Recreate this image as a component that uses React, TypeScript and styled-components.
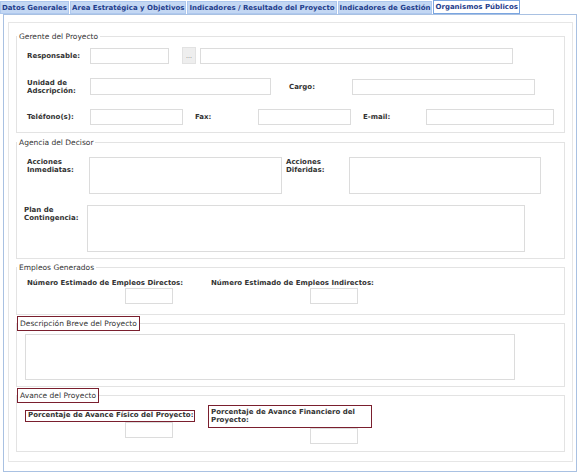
import * as React from 'react'
import styled, { createGlobalStyle } from 'styled-components'

const GlobalStyle = createGlobalStyle`
  html, body {
    margin: 0;
    padding: 0;
    background: #ffffff;
  }
  body {
    font-family: "DejaVu Sans", Verdana, sans-serif;
    font-size: 7px;
    color: #333333;
  }
`

const Page = styled.div`
  width: 581px;
  height: 472px;
  display: flex;
  flex-direction: column;
  box-sizing: border-box;
`

const TabBar = styled.div`
  display: flex;
  align-items: flex-end;
  gap: 1px;
  height: 14px;
`

const Tab = styled.div<{ $active?: boolean }>`
  height: ${p => (p.$active ? '14px' : '13px')};
  box-sizing: border-box;
  padding: 0 1px;
  display: flex;
  align-items: center;
  font-weight: bold;
  font-size: 7px;
  white-space: nowrap;
  color: #1f3d8c;
  background: ${p => (p.$active ? '#ffffff' : '#c3d7f3')};
  border: 1px solid ${p => (p.$active ? '#7aa5e0' : '#aec8ee')};
`

const Panel = styled.div`
  margin: 0 4px 2px 3px;
  flex: 1;
  border: 1px solid #a9c1e2;
  padding: 7px 4px 9px 4px;
  display: flex;
`

const Inner = styled.div`
  flex: 1;
  border: 1px solid #e6e6e6;
  padding: 9px 7px 9px 7px;
  display: flex;
  flex-direction: column;
`

const Section = styled.fieldset<{ $mt?: number; $h: number }>`
  margin: ${p => p.$mt ?? 0}px 0 0 0;
  padding: 0 10px;
  height: ${p => p.$h}px;
  box-sizing: border-box;
  border: 1px solid #e3e3e3;
  display: flex;
  flex-direction: column;
  min-width: 0;
`

const Legend = styled.legend<{ $marked?: boolean }>`
  margin-left: -10px;
  padding: ${p => (p.$marked ? '2px 2px 2px 2px' : '0 2px 0 2px')};
  font-size: 7.5px;
  line-height: 9px;
  color: #333333;
  border: ${p => (p.$marked ? '1px solid #7a1f2e' : 'none')};
`

const Row = styled.div<{ $mt: number; $align?: string }>`
  display: flex;
  align-items: ${p => p.$align ?? 'center'};
  margin-top: ${p => p.$mt}px;
`

const Label = styled.label<{ $w: number; $ml?: number; $marked?: boolean; $nowrap?: boolean }>`
  width: ${p => p.$w}px;
  margin-left: ${p => p.$ml ?? 0}px;
  flex-shrink: 0;
  font-weight: bold;
  font-size: 7px;
  line-height: 8px;
  color: #333333;
  box-sizing: border-box;
  white-space: ${p => (p.$nowrap ? 'nowrap' : 'normal')};
  border: ${p => (p.$marked ? '1px solid #7a1f2e' : 'none')};
  padding: ${p => (p.$marked ? '0 2px' : '0')};
`

const Input = styled.input<{ $w: number; $h?: number; $ml?: number }>`
  width: ${p => p.$w}px;
  height: ${p => p.$h ?? 16}px;
  margin: 0 0 0 ${p => p.$ml ?? 0}px;
  box-sizing: border-box;
  border: 1px solid #dcdcdc;
  background: #ffffff;
  padding: 0;
  flex-shrink: 0;
`

const Area = styled.textarea<{ $w: number; $h: number; $ml?: number }>`
  width: ${p => p.$w}px;
  height: ${p => p.$h}px;
  margin: 0 0 0 ${p => p.$ml ?? 0}px;
  box-sizing: border-box;
  border: 1px solid #dcdcdc;
  background: #ffffff;
  resize: none;
  padding: 0;
  flex-shrink: 0;
`

const DotsButton = styled.button`
  width: 14px;
  height: 17px;
  margin-left: 13px;
  box-sizing: border-box;
  border: 1px solid #e2e2e2;
  background: #eeeeee;
  color: #777777;
  font-size: 7px;
  padding: 0;
  line-height: 10px;
  flex-shrink: 0;
`

const Estimate = styled.div<{ $w: number; $ml?: number }>`
  width: ${p => p.$w}px;
  margin-left: ${p => p.$ml ?? 0}px;
  display: flex;
  flex-direction: column;
  align-items: flex-start;
  flex-shrink: 0;
`

export default function App() {
  return (
    <>
      <GlobalStyle />
      <Page>
        <TabBar>
          <Tab>Datos Generales</Tab>
          <Tab>Area Estratégica y Objetivos</Tab>
          <Tab>Indicadores / Resultado del Proyecto</Tab>
          <Tab>Indicadores de Gestión</Tab>
          <Tab $active>Organismos Públicos</Tab>
        </TabBar>
        <Panel>
          <Inner>
            <Section $h={101}>
              <Legend>Gerente del Proyecto</Legend>
              <Row $mt={6}>
                <Label $w={63}>Responsable:</Label>
                <Input $w={79} />
                <DotsButton>...</DotsButton>
                <Input $w={313} $ml={4} />
              </Row>
              <Row $mt={14}>
                <Label $w={63}>Unidad de Adscripción:</Label>
                <Input $w={181} $h={17} />
                <Label $w={63} $ml={18}>Cargo:</Label>
                <Input $w={183} />
              </Row>
              <Row $mt={14}>
                <Label $w={63}>Teléfono(s):</Label>
                <Input $w={93} />
                <Label $w={63} $ml={12}>Fax:</Label>
                <Input $w={93} />
                <Label $w={63} $ml={12}>E-mail:</Label>
                <Input $w={128} />
              </Row>
            </Section>

            <Section $mt={5} $h={121}>
              <Legend>Agencia del Decisor</Legend>
              <Row $mt={10} $align="flex-start">
                <Label $w={62} style={{ paddingTop: 1 }}>Acciones Inmediatas:</Label>
                <Area $w={193} $h={37} />
                <Label $w={63} $ml={4} style={{ paddingTop: 1 }}>Acciones Diferidas:</Label>
                <Area $w={192} $h={37} />
              </Row>
              <Row $mt={11} $align="flex-start">
                <Label $w={63} style={{ marginLeft: -3, paddingTop: 1 }}>Plan de Contingencia:</Label>
                <Area $w={438} $h={47} />
              </Row>
            </Section>

            <Section $mt={4} $h={52}>
              <Legend>Empleos Generados</Legend>
              <Row $mt={7} $align="flex-start">
                <Estimate $w={160}>
                  <Label $w={160} $nowrap>Número Estimado de Empleos Directos:</Label>
                  <Input $w={48} $h={16} $ml={98} style={{ marginTop: 1 }} />
                </Estimate>
                <Estimate $w={168} $ml={24}>
                  <Label $w={168} $nowrap>Número Estimado de Empleos Indirectos:</Label>
                  <Input $w={48} $h={16} $ml={99} style={{ marginTop: 1 }} />
                </Estimate>
              </Row>
            </Section>

            <Section $mt={1} $h={71}>
              <Legend $marked>Descripción Breve del Proyecto</Legend>
              <Row $mt={3}>
                <Area $w={490} $h={46} $ml={-2} />
              </Row>
            </Section>

            <Section $mt={1} $h={64}>
              <Legend $marked>Avance del Proyecto</Legend>
              <Row $mt={2} $align="flex-start">
                <Estimate $w={170} $ml={-2}>
                  <Label $w={170} $marked $nowrap style={{ marginTop: 5, height: 12 }}>
                    Porcentaje de Avance Físico del Proyecto:
                  </Label>
                  <Input $w={48} $h={16} $ml={100} />
                </Estimate>
                <Estimate $w={164} $ml={13}>
                  <Label $w={164} $marked style={{ padding: '2px 2px 3px', lineHeight: '8px' }}>
                    Porcentaje de Avance Financiero del Proyecto:
                  </Label>
                  <Input $w={48} $h={16} $ml={102} />
                </Estimate>
              </Row>
            </Section>
          </Inner>
        </Panel>
      </Page>
    </>
  )
}
